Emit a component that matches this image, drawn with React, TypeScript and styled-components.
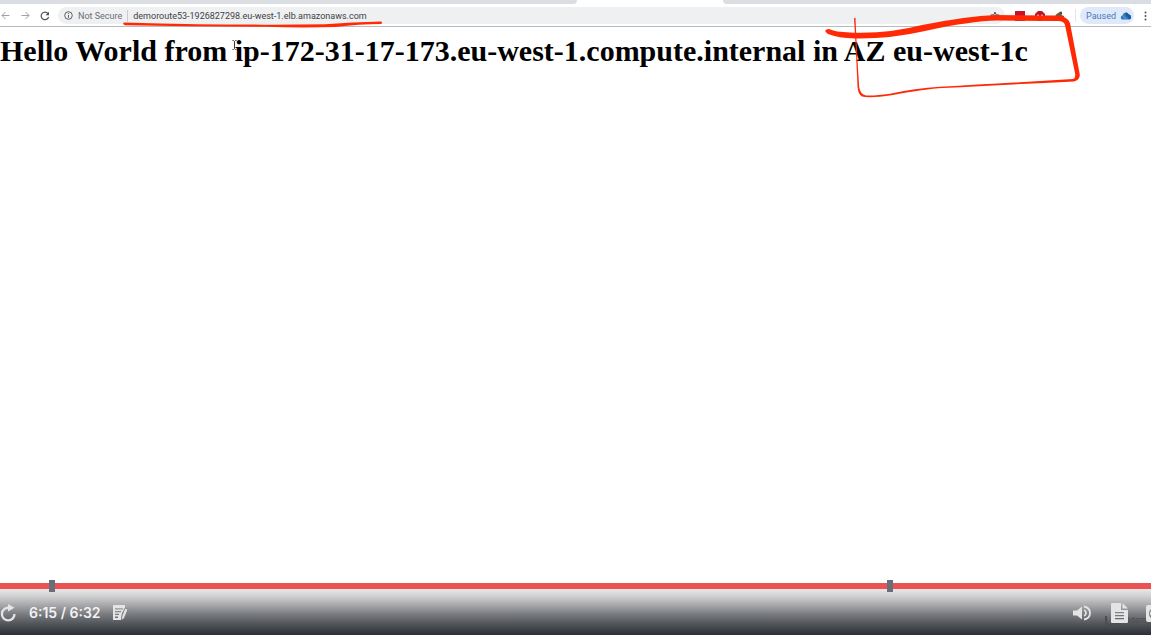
import React from 'react';
import styled, { createGlobalStyle } from 'styled-components';

const GlobalStyle = createGlobalStyle`
  * { box-sizing: border-box; }
  body { margin: 0; background: #fff; overflow: hidden; }
  button, input { font: inherit; color: inherit; }
`;

const Player = styled.div`
  position: relative;
  display: flex;
  flex-direction: column;
  height: 100vh;
  padding-bottom: 3px;
  overflow: hidden;
  font-family: Inter, 'Liberation Sans', sans-serif;
`;

const TabStrip = styled.div`
  display: flex;
  flex: none;
  height: 4px;
  background: #fff;
`;

const InactiveTabs = styled.div<{ $side: 'left' | 'right' }>`
  flex: ${p => (p.$side === 'left' ? '577 1 0' : '428 1 0')};
  background: #dadde1;
  border-radius: ${p => (p.$side === 'left' ? '0 0 4px 0' : '0 0 0 4px')};
`;

const ActiveTab = styled.div`
  flex: 146 1 0;
  background: #fff;
`;

const Toolbar = styled.header`
  display: flex;
  flex: none;
  align-items: center;
  height: 23px;
  padding-top: 1px;
  border-bottom: 1px solid #b9babc;
  background: #fff;
  font: 9px/12px Roboto, 'Liberation Sans', sans-serif;
`;

const IconButton = styled.button<{ $width: number; $color?: string }>`
  display: flex;
  flex: none;
  align-items: center;
  justify-content: center;
  width: ${p => p.$width}px;
  height: 100%;
  padding: 0;
  border: 0;
  background: none;
  color: ${p => p.$color ?? '#505357'};
`;

const Omnibox = styled.div`
  display: flex;
  flex: 1;
  align-items: center;
  height: 17px;
  margin-left: 8px;
  padding: 0 4px 0 6px;
  border-radius: 9px;
  background: #eff0f2;
  color: #6a6d71;
`;

const Security = styled.span`
  margin-left: 5px;
  padding-right: 5px;
  border-right: 1px solid #c9cbce;
`;

const Address = styled.input`
  flex: 1;
  min-width: 0;
  height: 14px;
  padding: 0 0 0 5px;
  border: 0;
  outline: 0;
  background: none;
  color: #3d4043;
`;

const Extensions = styled.div`
  display: flex;
  align-items: center;
  gap: 10px;
  height: 13px;
  margin-left: 10px;
  padding-right: 10px;
  border-right: 1px solid #e3e4e6;
`;

const Paused = styled.button`
  display: flex;
  align-items: center;
  gap: 4px;
  height: 17px;
  margin: 0 5px 0 4px;
  padding: 0 2px 0 6px;
  border: 0;
  border-radius: 9px;
  background: #dfe9f9;
  color: #4a78bd;
`;

const Page = styled.main`
  flex: 1;
  min-height: 0;
  padding-top: 6px;
`;

const Heading = styled.h1`
  margin: 0;
  color: #000;
  font: bold 30px/36px 'Liberation Serif', serif;
  white-space: nowrap;
`;

const Ink = styled.svg`
  position: absolute;
  top: 0;
  left: 0;
  fill: #ff2a05;
  pointer-events: none;
`;

const Beam = styled.svg`
  position: absolute;
  top: 40px;
  left: 232px;
  pointer-events: none;
`;

const Timeline = styled.div`
  position: relative;
  z-index: 1;
  flex: none;
  height: 6px;
  background: #ec5252;
`;

const Seek = styled.input`
  display: block;
  width: 100%;
  height: 6px;
  margin: 0;
  appearance: none;
  background: none;
  &::-webkit-slider-thumb { appearance: none; width: 0; height: 0; }
`;

const Marker = styled.button<{ $at: number }>`
  position: absolute;
  top: -3px;
  left: ${p => p.$at}%;
  width: 6px;
  height: 12px;
  padding: 0;
  border: 0;
  background: #686f7a;
`;

const Controls = styled.footer`
  position: relative;
  display: flex;
  flex: none;
  align-items: center;
  height: 46px;
  padding-top: 2px;
  overflow: hidden;
  background: linear-gradient(#e8e8e8 0, #cfcfd0 16%, #a5a6a8 36%, #797b7f 55%, #515459 76%, #2b2e36 100%);
  color: #e8e8ea;
`;

const ControlButton = styled(IconButton)`
  position: relative;
  color: #e3e4e6;
`;

const Time = styled.span`
  margin: 0 11px 0 12px;
  color: #f2f2f3;
  font-size: 14px;
  font-weight: 600;
  line-height: 16px;
  white-space: nowrap;
`;

const Spacer = styled.div`
  flex: 1;
`;

const Watermark = styled.span`
  position: absolute;
  right: 0;
  bottom: 9px;
  display: flex;
  align-items: center;
  gap: 2px;
  color: #4a4d52;
  font-size: 8px;
  line-height: 12px;
`;

const Arrow = ({ flip }: { flip?: boolean }) => (
  <svg width="9" height="9" viewBox="0 0 9 9" fill="none" stroke="currentColor" strokeWidth="1">
    <path d={flip ? 'M.5 4.5h7.5M4.5 1l3.5 3.5L4.5 8' : 'M8.5 4.5H1M4.5 1L1 4.5 4.5 8'} />
  </svg>
);

export default function App() {
  return (
    <Player>
      <GlobalStyle />
      <TabStrip>
        <InactiveTabs $side="left" />
        <ActiveTab />
        <InactiveTabs $side="right" />
      </TabStrip>
      <Toolbar>
        <IconButton $width={10} $color="#a0a2a5" aria-label="Back"><Arrow /></IconButton>
        <IconButton $width={30} $color="#a0a2a5" aria-label="Forward"><Arrow flip /></IconButton>
        <IconButton $width={10} aria-label="Reload">
          <svg width="10" height="10" viewBox="0 0 10 10" fill="none" stroke="currentColor" strokeWidth="1.2">
            <path d="M8 2.6A3.8 3.8 0 1 0 8.6 6" />
            <path d="M9 .8v3.5H5.5z" fill="currentColor" stroke="none" />
          </svg>
        </IconButton>
        <Omnibox>
          <svg width="9" height="9" viewBox="0 0 9 9" fill="none" stroke="#5b5e62" strokeWidth="1">
            <circle cx="4.5" cy="4.5" r="3.8" />
            <path d="M4.5 4v2.8M4.5 2.1v1" />
          </svg>
          <Security>Not Secure</Security>
          <Address aria-label="Address" readOnly value="demoroute53-1926827298.eu-west-1.elb.amazonaws.com" />
          <IconButton $width={12} aria-label="Bookmark">
            <svg width="10" height="10" viewBox="0 0 10 10" fill="none" stroke="currentColor" strokeWidth="1">
              <path d="M5 1l1.1 2.8 3 .2-2.3 1.9.8 2.9L5 7.2 2.4 8.8l.8-2.9L.9 4l3-.2z" />
            </svg>
          </IconButton>
        </Omnibox>
        <Extensions>
          <svg width="10" height="10" viewBox="0 0 10 10"><path fill="#c4142b" d="M0 0h10v10H0z" /></svg>
          <svg width="10" height="10" viewBox="0 0 10 10">
            <path fill="#b9152a" d="M3 0h4l3 3v4L7 10H3L0 7V3z" />
            <path d="M2 4.5h2M6 4.5h2" stroke="#fff" strokeWidth="1.5" />
          </svg>
          <svg width="10" height="10" viewBox="0 0 10 10">
            <path fill="#715a43" d="M6 .5L4.5 1 1 3.5 0 6l4 3 5-1V5L6.5 4z" />
            <path fill="#49423a" d="M5 2l2-1.5L7 4z" />
          </svg>
        </Extensions>
        <Paused>
          Paused
          <svg width="12" height="10" viewBox="0 0 14 11">
            <path fill="#2e7bbd" d="M2 9.5Q0 8 1.5 5.5L3 4.5Q4 1 7 1.3 9 1.5 10 3.5 13 4 13 7q0 2-2 2.5z" />
            <path fill="#195c9d" d="M7 1.3Q9 1.5 10 3.5 13 4 13 7q0 2-2 2.5L6.5 4z" />
            <path stroke="#71acdb" d="M3 4.5l4 5" />
          </svg>
        </Paused>
        <IconButton $width={12} aria-label="Menu">
          <svg width="3" height="10" viewBox="0 0 3 10" fill="currentColor">
            <circle cx="1.5" cy="1.5" r="1" /><circle cx="1.5" cy="5" r="1" /><circle cx="1.5" cy="8.5" r="1" />
          </svg>
        </IconButton>
      </Toolbar>
      <Page>
        <Heading>Hello World from ip-172-31-17-173.eu-west-1.compute.internal in AZ eu-west-1c</Heading>
      </Page>
      <Beam width="5" height="10" viewBox="0 0 5 10" fill="none" stroke="#333" strokeWidth="1">
        <path d="M.5.5h1l1 1 1-1h1M2.5 1.5v7M.5 9.5h1l1-1 1 1h1" />
      </Beam>
      <Ink width="1100" height="110" viewBox="0 0 1100 110" aria-hidden="true">
        <path d="M124 22.5Q160 23.5 198 24.2Q260 25 325 24.3Q352 22 381 21.5Q383 22.5 381 24Q360 24 335 27Q300 28 265 26.7Q190 26.5 125 25.3Q122 24 124 22.5Z" />
        <path d="M829 29Q835 32 850 32.5Q888 34 922 25Q968 16 995 15L1058 15.5Q1067 16 1070 23L1079.5 73Q1081 80 1074 81.5Q1000 85 943 88Q925 89 893 95Q870 98.500 862 96.500Q858 94 857.500 87Q856 50 854 18L855.500 18Q857 55 859.200 87Q860 94 866 95.500Q875 96 890 93.800Q915 88 940 86.700Q1000 83.500 1073 79Q1076 78 1075 73L1065 25Q1064 21 1058 21L997 20.500Q970 21 925 31Q890 39 855 38.500Q838 38 828 34Q822 30 829 29Z" />
      </Ink>
      <Timeline>
        <Seek type="range" min={0} max={392} defaultValue={375} aria-label="Seek" />
        <Marker $at={4.27} aria-label="First bookmark" />
        <Marker $at={77.07} aria-label="Second bookmark" />
      </Timeline>
      <Controls>
        <Watermark>
          <svg width="17" height="11" viewBox="0 0 17 11" fill="none" stroke="currentColor" strokeWidth="2">
            <path d="M1 1v5q0 4 3 4t3-4V1M9 3v3q0 3 3 3t4-4" />
          </svg>
          Udemy
        </Watermark>
        <ControlButton $width={17} aria-label="Replay">
          <svg width="17" height="18" viewBox="0 0 17 18" fill="none" stroke="currentColor" strokeWidth="2.3">
            <path d="M9 3.8A6.3 6.3 0 1 0 14.5 10" />
            <path d="M8 0l6.5 3.8L8 7.5z" fill="currentColor" stroke="none" />
          </svg>
        </ControlButton>
        <Time>6:15 / 6:32</Time>
        <ControlButton $width={17} aria-label="Add note">
          <svg width="17" height="16" viewBox="0 0 17 16" fill="currentColor">
            <path fillRule="evenodd" d="M1 0h12v3L10 8l-1 7H1zM3 3.2v1.3h8V3.2zM3 6v1.3h6V6zM3 8.8v1.3h4V8.8zM3 11.6v1.3h3v-1.3z" />
            <path d="M13 3l3 1.5-4 9L9.5 15 10 11z" stroke="#77797d" strokeWidth=".7" />
          </svg>
        </ControlButton>
        <Spacer />
        <ControlButton $width={19} aria-label="Mute">
          <svg width="19" height="16" viewBox="0 0 19 16" fill="none" stroke="currentColor" strokeWidth="1.8">
            <path d="M0 5.5h4l5-4v13l-5-4H0z" fill="currentColor" stroke="none" />
            <path d="M11 5q2 .7 2 3t-2 3M11 1.5q6 1.2 6 6.5t-6 6.5" />
          </svg>
        </ControlButton>
        <ControlButton $width={54} aria-label="Transcript">
          <svg width="17" height="20" viewBox="0 0 17 20" fill="currentColor">
            <path fillRule="evenodd" d="M0 1q0-1 1-1h9v7h7v12q0 1-1 1H1q-1 0-1-1zM4 9v1.3h9V9zM4 12v1.3h9V12zM4 15v1.3h9V15z" />
            <path d="M11.5 0l5.5 5.5h-5.5z" />
          </svg>
        </ControlButton>
        <ControlButton $width={5} aria-label="Captions">
          <svg width="5" height="17" viewBox="0 0 5 17" fill="currentColor">
            <path d="M2 0h3v4Q3 5 3 8.5T5 13v4H2q-2 0-2-2V2q0-2 2-2z" />
            <path d="M5 6.5q-1 0-1 2t1 2z" />
          </svg>
        </ControlButton>
      </Controls>
    </Player>
  );
}
